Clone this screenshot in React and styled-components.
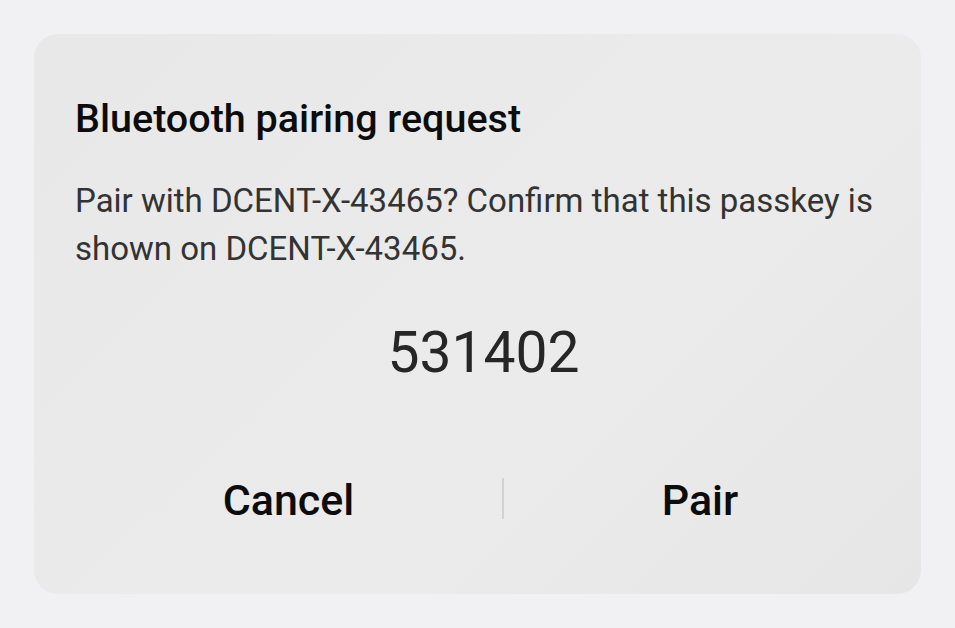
import React from 'react'
import styled, { createGlobalStyle } from 'styled-components'

const GlobalStyle = createGlobalStyle`
  html, body {
    margin: 0;
    padding: 0;
    background: #f1f1f3;
  }
  body {
    font-family: Roboto, "Noto Sans", sans-serif;
  }
`

const Page = styled.div`
  width: 955px;
  height: 628px;
  padding: 34px;
  box-sizing: border-box;
`

const Dialog = styled.div`
  height: 560px;
  box-sizing: border-box;
  padding: 0 41px;
  border-radius: 24px;
  background: linear-gradient(135deg, #e8e8e8 0%, #ebebeb 60%, #e6e6e6 100%);
  display: flex;
  flex-direction: column;
`

const Title = styled.h1`
  margin: 62px 0 0;
  font-size: 39.5px;
  line-height: 46px;
  font-weight: 500;
  color: #0c0c0c;
`

const Message = styled.p`
  margin: 34.5px 0 0;
  font-size: 33px;
  line-height: 48px;
  font-weight: 400;
  color: #333;
`

const Passkey = styled.div`
  margin-top: 46.5px;
  text-align: center;
  font-size: 57px;
  line-height: 68px;
  color: #262626;
  padding-left: 12px;
`

const Actions = styled.div`
  margin-top: 88px;
  display: grid;
  grid-template-columns: 427px 2px 1fr;
  align-items: center;
  height: 50px;
`

const Action = styled.button`
  border: 0;
  background: none;
  padding: 0 0 0 ${p => p.$shift || 0}px;
  font-family: inherit;
  font-size: 43px;
  line-height: 50px;
  font-weight: 500;
  color: #0c0c0c;
  text-align: center;
`

const Divider = styled.span`
  width: 2px;
  height: 41px;
  margin-bottom: 4px;
  background: #d2d2d2;
`

export default function App() {
  return (
    <>
      <GlobalStyle />
      <Page>
        <Dialog>
          <Title>Bluetooth pairing request</Title>
          <Message>
            Pair with DCENT-X-43465? Confirm that this passkey is shown on DCENT-X-43465.
          </Message>
          <Passkey>531402</Passkey>
          <Actions>
            <Action>Cancel</Action>
            <Divider />
            <Action $shift={16}>Pair</Action>
          </Actions>
        </Dialog>
      </Page>
    </>
  )
}
